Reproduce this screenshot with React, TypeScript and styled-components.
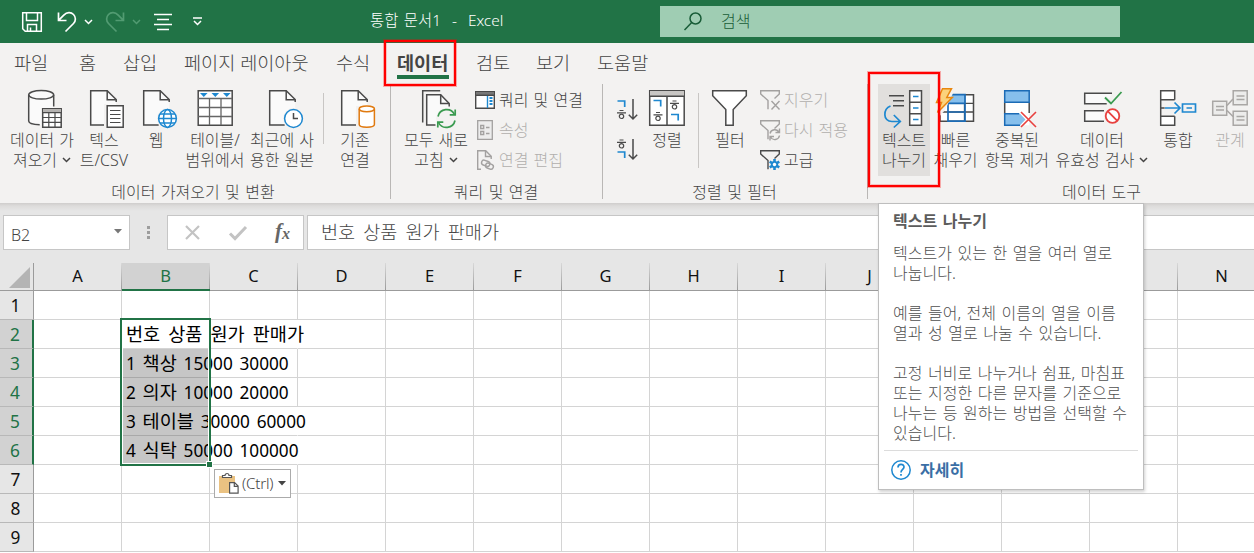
import React from 'react';
import styled, { createGlobalStyle, css } from 'styled-components';

const GREEN = '#217346';
const INK = '#444444';
const MUTED = '#b1afad';
const BLUE = '#1e88d0';
const STEEL = '#4a4a4a';

const GlobalStyle = createGlobalStyle`
  * { box-sizing: border-box; }
  body {
    margin: 0;
    overflow: hidden;
    background: #fff;
    font-family: 'Noto Sans', 'Noto Sans CJK KR', sans-serif;
    font-weight: 300;
    color: ${INK};
  }
  svg { display: block; flex: none; overflow: visible; }
`;

const Window = styled.div`
  position: relative;
  width: 1254px;
  height: 553px;
  overflow: hidden;
  display: flex;
  flex-direction: column;
`;

/* ---------- title bar ---------- */

const TitleBar = styled.header`
  height: 43px;
  flex: none;
  display: flex;
  align-items: center;
  background: ${GREEN};
  color: #fff;
`;

const QuickAccess = styled.div`
  width: 370px;
  display: flex;
  align-items: center;
  padding-left: 21px;
`;

const QuickIcon = styled.span<{ $gap?: number; $dim?: boolean }>`
  display: block;
  margin-left: ${p => p.$gap ?? 0}px;
  opacity: ${p => (p.$dim ? 0.32 : 1)};
`;

const DocTitle = styled.div`
  width: 290px;
  font-size: 15.4px;
  line-height: 20px;
  word-spacing: 1.5px;
  white-space: pre;
  padding-bottom: 2px;
`;

const SearchBox = styled.div`
  width: 460px;
  height: 31px;
  display: flex;
  align-items: center;
  padding: 0 0 1px 24px;
  gap: 19px;
  background: #9fcdb3;
  color: #185c37;
  font-size: 16px;
  line-height: 20px;
`;

/* ---------- ribbon ---------- */

const TabStrip = styled.nav`
  height: 40px;
  flex: none;
  display: flex;
  padding-left: 14px;
  background: #f3f2f1;
`;

const Tab = styled.div<{ $w: number; $gap: number; $active?: boolean }>`
  width: ${p => p.$w}px;
  height: 36px;
  margin-right: ${p => p.$gap}px;
  padding-top: 6px;
  font-size: 18.6px;
  line-height: 27px;
  white-space: nowrap;
  ${p =>
    p.$active &&
    css`
      font-weight: 700;
      color: #444;
      border-bottom: 4px solid ${GREEN};
    `}
`;

const Ribbon = styled.section`
  height: 120px;
  flex: none;
  display: flex;
  background: #f3f2f1;
`;

const Group = styled.div<{ $w: number; $last?: boolean }>`
  width: ${p => p.$w}px;
  flex: none;
  height: 115px;
  margin-top: 1px;
  display: flex;
  flex-direction: column;
  border-right: ${p => (p.$last ? 'none' : '1px solid #b9b7b5')};
`;

const GroupBody = styled.div<{ $pad: number }>`
  display: flex;
  height: 93px;
  padding-left: ${p => p.$pad}px;
`;

const GroupLabel = styled.div<{ $w: number }>`
  width: ${p => p.$w}px;
  height: 22px;
  padding-top: 2px;
  text-align: center;
  font-size: 16px;
  line-height: 26px;
  word-spacing: 1.2px;
  white-space: nowrap;
`;

const BigButton = styled.div<{ $w: number; $active?: boolean; $disabled?: boolean }>`
  width: ${p => p.$w}px;
  flex: none;
  height: 92px;
  padding-top: 4px;
  display: flex;
  flex-direction: column;
  align-items: center;
  background: ${p => (p.$active ? '#e1dfdd' : 'transparent')};
  color: ${p => (p.$disabled ? MUTED : INK)};
`;

const Caption = styled.span`
  display: flex;
  align-items: center;
  gap: 5px;
  height: 20px;
  font-size: 16px;
  line-height: 20px;
  word-spacing: 1px;
  white-space: nowrap;
`;

const Divider = styled.i<{ $h: number; $l: number; $r: number }>`
  width: 1px;
  height: ${p => p.$h}px;
  margin: 9px ${p => p.$r}px 0 ${p => p.$l}px;
  background: #c8c6c4;
`;

const SmallStack = styled.div<{ $gap?: number }>`
  display: flex;
  flex-direction: column;
  padding: 1px 0 0 ${p => p.$gap ?? 0}px;
`;

const SmallButton = styled.div<{ $disabled?: boolean }>`
  height: 30px;
  display: flex;
  align-items: center;
  gap: 4px;
  font-size: 16px;
  line-height: 20px;
  word-spacing: 1px;
  white-space: nowrap;
  color: ${p => (p.$disabled ? MUTED : INK)};
`;

const SortStack = styled.div`
  width: 34px;
  padding: 14px 0 0 13px;
  display: flex;
  flex-direction: column;
  gap: 18px;
`;

/* ---------- formula bar ---------- */

const FormulaBar = styled.section`
  height: 60px;
  flex: none;
  display: flex;
  align-items: flex-start;
  padding: 12px 0 0 3px;
  background: linear-gradient(#cfcdcc 0, #dddcdb 3px, #e6e6e6 8px);
`;

const Field = styled.div<{ $w: number }>`
  width: ${p => p.$w}px;
  height: 35px;
  flex: none;
  display: flex;
  align-items: center;
  background: #fff;
  border: 1px solid #c6c6c6;
`;

const NameField = styled(Field)`
  justify-content: space-between;
  padding: 4px 7px 0 7px;
  font-size: 16px;
  line-height: 20px;
  svg { margin-top: -6px; }
`;

const Grip = styled.div`
  width: 37px;
  height: 35px;
  flex: none;
  display: flex;
  flex-direction: column;
  align-items: center;
  justify-content: center;
  gap: 2px;
`;

const GripDot = styled.i`
  width: 3px;
  height: 3px;
  background: #9d9d9d;
`;

const FxField = styled(Field)`
  padding-left: 13px;
`;

const FormulaField = styled(Field)`
  margin-left: 3px;
  padding: 0 0 2px 13px;
  font-size: 18.6px;
  line-height: 24px;
  word-spacing: 3.2px;
  color: ${INK};
`;

/* ---------- sheet ---------- */

const Sheet = styled.section`
  display: flex;
  flex-direction: column;
  font-weight: 400;
`;

const SheetRow = styled.div`
  display: flex;
  flex: none;
`;

const Corner = styled.div`
  width: 34px;
  height: 28px;
  flex: none;
  display: flex;
  padding: 4px 0 0 9px;
  background: #e6e6e6;
  border-right: 1px solid #9b9b9b;
  border-bottom: 1px solid #9b9b9b;
`;

const ColumnHead = styled.div<{ $on?: boolean }>`
  width: 88px;
  height: 28px;
  flex: none;
  padding-right: 1px;
  text-align: center;
  font-size: 16.5px;
  line-height: 25px;
  color: ${p => (p.$on ? GREEN : '#111')};
  background:
    linear-gradient(#d8d8d8, #9b9b9b) right / 1px 100% no-repeat,
    ${p => (p.$on ? '#d2d2d2' : '#e6e6e6')};
  border-bottom: ${p => (p.$on ? `2px solid ${GREEN}` : '1px solid #9b9b9b')};
`;

const RowHead = styled.div<{ $on?: boolean }>`
  width: 34px;
  height: 29px;
  flex: none;
  padding-right: 2px;
  text-align: center;
  font-size: 17.3px;
  line-height: 30px;
  color: ${p => (p.$on ? GREEN : '#111')};
  background: ${p => (p.$on ? '#d2d2d2' : '#e6e6e6')};
  border-bottom: 1px solid #b8b8b8;
  border-right: ${p => (p.$on ? `2px solid ${GREEN}` : '1px solid #9b9b9b')};
`;

const Cell = styled.div<{ $fill?: boolean; $open?: boolean }>`
  width: 88px;
  height: 29px;
  flex: none;
  padding-left: 4px;
  font-size: 17.2px;
  line-height: 28px;
  white-space: pre;
  color: #000;
  background: ${p => (p.$fill ? '#c6c6c6' : '#fff')};
  border-bottom: 1px solid ${p => (p.$fill ? '#a9a9a9' : '#d4d4d4')};
  border-right: 1px solid ${p => (p.$open ? 'transparent' : '#d4d4d4')};
`;

const CellText = styled.span`
  position: relative;
  z-index: 1;
  word-spacing: 2.3px;
`;

const Hangul = styled.span<{ $spread?: boolean }>`
  font-size: 18.6px;
  word-spacing: ${p => (p.$spread ? 3.2 : 2)}px;
`;

/* ---------- floating pieces ---------- */

const SelectionFrame = styled.div`
  position: absolute;
  z-index: 2;
  left: 120px;
  top: 318px;
  width: 91px;
  height: 148px;
  border: 2px solid ${GREEN};
  box-shadow: inset 0 0 0 1px #fff;
  &::after {
    content: '';
    position: absolute;
    right: -3px;
    bottom: -3px;
    width: 5px;
    height: 5px;
    background: ${GREEN};
    box-shadow: 0 0 0 1px #fff;
  }
`;

const PasteChip = styled.div`
  position: absolute;
  z-index: 2;
  left: 214px;
  top: 469px;
  width: 77px;
  height: 29px;
  display: flex;
  align-items: center;
  padding-left: 4px;
  gap: 3px;
  background: #fff;
  border: 1px solid #ababab;
  font-size: 15.2px;
  line-height: 20px;
  letter-spacing: -0.2px;
  color: #444;
`;

const PasteLabel = styled.span`
  padding: 0 2px 2px 0;
`;

const Marker = styled.div<{ $x: number; $y: number; $w: number; $h: number }>`
  position: absolute;
  z-index: 5;
  left: ${p => p.$x}px;
  top: ${p => p.$y}px;
  width: ${p => p.$w}px;
  height: ${p => p.$h}px;
  border: 2px solid #ff0000;
  box-shadow: 0 0 0 1px rgba(255, 0, 0, 0.3), inset 0 0 0 1px rgba(255, 0, 0, 0.2);
`;

const Tooltip = styled.aside`
  position: absolute;
  z-index: 4;
  left: 878px;
  top: 203px;
  width: 266px;
  height: 287px;
  padding: 7px 5px 0 5px;
  background: #fff;
  border: 1px solid #bebebe;
  box-shadow: 1px 2px 3px rgba(0, 0, 0, 0.18);
  color: #505050;
  font-size: 16px;
  line-height: 20px;
  word-spacing: 1.4px;
`;

const TipTitle = styled.h1`
  margin: 0;
  padding-left: 9px;
  font-size: 16px;
  line-height: 20px;
  font-weight: 700;
  color: #5c5c5c;
`;

const TipText = styled.p`
  margin: 12px 0 0;
  padding-left: 9px;
  white-space: pre;
  & + & { margin-top: 20px; }
`;

const TipFooter = styled.div`
  margin-top: 7px;
  padding: 9px 0 0 7px;
  display: flex;
  align-items: center;
  gap: 9px;
  border-top: 1px solid #dcdcdc;
  color: #3a6ea5;
  font-weight: 700;
`;

/* ---------- icons ---------- */

const Chevron = ({ color = INK }: { color?: string }) => (
  <svg width="9" height="6" viewBox="0 0 9 6" fill="none" stroke={color} strokeWidth="1.5">
    <path d="M1 1l3.5 3.5L8 1" />
  </svg>
);

const Big = ({ children }: { children: React.ReactNode }) => (
  <svg width="40" height="42" viewBox="0 0 40 42" fill="none" stroke={STEEL} strokeWidth="1.5">
    {children}
  </svg>
);

const Page = ({ x }: { x: number }) => (
  <g transform={`translate(${x} 0)`}>
    <path d="M0 2.7h16.5l9 9.3v24.9H0z" fill="#fafafa" stroke="none" />
    <path d="M25.5 14v-2.5L16.5 2.7H0v34.2h15" />
    <path d="M16.5 2.7v9h9" />
  </g>
);

const DatabaseTable = () => (
  <Big>
    <path d="M6.7 7v26c0 2.4 5.5 3.8 12.5 3.8V20h12.500V7" fill="#fafafa" stroke="none" />
    <ellipse cx="19.2" cy="6.8" rx="12.5" ry="4.3" fill="#fafafa" />
    <path d="M6.7 7v26c0 2 4.5 3.5 11 3.8M31.7 7v11.5" />
    <path d="M20.7 20.7h18.5v18.5H20.7z" fill="#fff" />
    <path d="M21 21h18v3.5H21z" fill="#b5b3b1" stroke="none" />
    <path d="M20.7 24.7h18.5M20.7 29.5h18.5M20.7 34.3h18.5M26.8 24.7v14.5M33 24.7v14.5" strokeWidth="1.2" />
  </Big>
);

const TextFile = () => (
  <Big>
    <Page x={6.7} />
    <path d="M20 16h4v22h-4z" fill="#f3f2f1" stroke="none" />
    <path d="M23.2 17.7h16v21.5h-16z" fill="#fff" />
    <path d="M26 22.5h10.5M26 26.5h10.5M26 30.5h10.5M26 34.5h10.5" strokeWidth="1.1" />
  </Big>
);

const WebFile = () => (
  <Big>
    <Page x={7.7} />
    <circle cx="31.5" cy="30.5" r="10.5" fill="#f3f2f1" stroke="none" />
    <g stroke={BLUE}>
      <circle cx="31.5" cy="30.5" r="8.9" fill="#fff" />
      <ellipse cx="31.5" cy="30.5" rx="4" ry="8.9" />
      <path d="M22.6 30.5h17.8M24 26h15M24 35h15" strokeWidth="1.3" />
    </g>
  </Big>
);

const TableRange = () => (
  <Big>
    <path d="M3.2 2.7h34v34.5h-34z" fill="#fff" />
    <path d="M3.2 10.5h34M3.2 19.5h34M3.2 28.5h34M14.5 10v27M26 10v27" stroke="#666" strokeWidth="1.3" />
    <path d="M5 5h7.6L8.8 9zM16.5 5h7.6l-3.8 4zM28 5h7.6l-3.8 4z" fill={BLUE} stroke="none" />
  </Big>
);

const RecentFile = () => (
  <Big>
    <Page x={7.7} />
    <circle cx="31.5" cy="30.5" r="10.5" fill="#f3f2f1" stroke="none" />
    <circle cx="31.5" cy="30.5" r="8.9" fill="#fff" stroke={BLUE} />
    <path d="M31.5 25v5.500h4.500" />
  </Big>
);

const ExistingLink = () => (
  <Big>
    <Page x={6.7} />
    <path d="M21 18h5v20h-5z" fill="#f3f2f1" stroke="none" />
    <g stroke="#e07a10" fill="#fff">
      <path d="M24.2 21v15.5c0 1.6 3.3 2.7 7.6 2.7s7.6-1.1 7.6-2.7V21" />
      <ellipse cx="31.8" cy="20.8" rx="7.6" ry="2.9" />
    </g>
  </Big>
);

const RefreshAll = () => (
  <Big>
    <path d="M6.7 34.5V2.7h17.5" />
    <path d="M10.7 6.7h14.5l8 8.5v21.7H10.7z" fill="#fafafa" stroke="none" />
    <path d="M19.5 36.9h-8.8V6.7h14l8.5 8.8v3" />
    <path d="M24.7 6.7v8.8h8.5" />
    <circle cx="30.5" cy="30.5" r="10.5" fill="#f3f2f1" stroke="none" />
    <g stroke="#3a9b50" strokeWidth="1.7">
      <path d="M22 28.500a8.800 8.800 0 0 1 16.500-2M39 32.500a8.800 8.800 0 0 1-16.500 2" />
      <path d="M39.2 21.5v5.3h-5.5M21.8 39.5v-5.3h5.5" />
    </g>
  </Big>
);

const QueriesPane = () => (
  <svg width="20" height="18" viewBox="0 0 20 18" fill="#fff" stroke={STEEL} strokeWidth="1.4">
    <path d="M.7.7h18.6v16.6H.7z" />
    <path d="M1 1h18v3H1z" fill="#777" stroke="none" />
    <path d="M.7 4.3h18.6" />
    <path d="M12.5 5v12" stroke={BLUE} />
    <path d="M14.5 7h3M14.5 10h3M14.5 13h3" stroke={BLUE} strokeWidth="2" />
  </svg>
);

const Properties = () => (
  <svg width="20" height="20" viewBox="0 0 20 20" fill="none" stroke="#a3a1a0" strokeWidth="1.3">
    <path d="M2.7.7h14.6v18.6H2.7z" fill="#ededed" />
    <path d="M5.7 5.5h3v3h-3zM5.7 11.5h3v3h-3zM11 7.5h3.5M11 13.5h3.5" />
  </svg>
);

const EditLinks = () => (
  <svg width="20" height="20" viewBox="0 0 20 20" fill="none" stroke="#a3a1a0" strokeWidth="1.4">
    <path d="M6 19.3H2.7V.7h8l5.5 5.5V9" />
    <path d="M10.5.7v5.8h5.7" />
    <rect x="6.5" y="10.5" width="8.5" height="5" rx="2.5" transform="rotate(20 10 13)" />
    <rect x="10.5" y="13.5" width="8" height="5" rx="2.5" transform="rotate(20 14 16)" />
  </svg>
);

const Giyeok = ({ x = 0, y }: { x?: number; y: number }) => (
  <path d={`M${x + 0.5} ${y}h7.2v6`} stroke={BLUE} strokeWidth="1.7" />
);

const Hieut = ({ x, y }: { x: number; y: number }) => (
  <g transform={`translate(${x} ${y})`} stroke={STEEL} strokeWidth="1.2">
    <path d="M2.5 .5h4M0 2.8h9" />
    <circle cx="4.5" cy="6.3" r="2.2" />
  </g>
);

const SortMini = ({ desc }: { desc?: boolean }) => (
  <svg width="21" height="22" viewBox="0 0 21 22" fill="none" stroke={STEEL} strokeWidth="1.5">
    <Giyeok y={desc ? 14 : 3} />
    <Hieut x={0} y={desc ? 1.5 : 12} />
    <path d="M16 1v20M11.8 16.800L16 21l4.200-4.200" />
  </svg>
);

const SortBig = () => (
  <Big>
    <path d="M2.7 2.7h34.5v34.5H2.7z" fill="#fff" />
    <path d="M3 3h34v5H3z" fill="#c8c6c4" stroke="none" />
    <path d="M2.7 8.2h34.5M20 8v29" />
    <Giyeok x={6} y={12.5} />
    <Hieut x={6.5} y={24} />
    <Hieut x={23} y={12.5} />
    <Giyeok x={23.5} y={26.5} />
  </Big>
);

const FilterBig = () => (
  <Big>
    <path d="M2.7 2.7h33.6v5L23.2 21.5v15.7h-7.400V21.500L2.700 7.700z" fill="#fff" />
  </Big>
);

const FilterSmall = ({ kind }: { kind: 'clear' | 'reapply' | 'advanced' }) => (
  <svg
    width="20"
    height="20"
    viewBox="0 0 20 20"
    fill="none"
    stroke={kind === 'advanced' ? STEEL : '#a3a1a0'}
    strokeWidth="1.4"
  >
    <path d="M8 19.3V10.500L.7 4V.7h18.600V4L14.500 8.500" />
    {kind === 'clear' && <path d="M11.500 11l8 8.500M19.500 11l-8 8.500" />}
    {kind === 'reapply' && (
      <path d="M10 13.500a4.800 4.800 0 0 1 9-1M19.500 15.500a4.800 4.800 0 0 1-9 1.500M19.500 8.500v4h-4M10 20.500v-4h4" />
    )}
    {kind === 'advanced' && (
      <g stroke={BLUE}>
        <path d="M14.5 9v11M9.7 11.7l9.6 5.6M9.7 17.3l9.6-5.6" strokeWidth="2.6" />
        <circle cx="14.5" cy="14.5" r="3.6" fill={BLUE} stroke="none" />
        <circle cx="14.5" cy="14.5" r="1.7" fill="#fff" stroke="none" />
      </g>
    )}
  </svg>
);

const TextToColumns = () => (
  <Big>
    <path d="M5 7.7h15M9 12.7h11M9 17.7h11" strokeWidth="1.6" />
    <path d="M25.7 2.7h11.8v34.5H25.700z" fill="#fff" />
    <path d="M25.7 14.2h11.8M25.7 25.7h11.8" />
    <path d="M29 8.5h5.5M29 20h5.5M29 31.500h5.500" stroke={BLUE} strokeWidth="1.700" />
    <path d="M6.500 18C-1 21-1.500 33.500 8 33.500h8M9.800 27l6.500 6.500-6.500 6" stroke={BLUE} strokeWidth="1.700" />
  </Big>
);

const FlashFill = () => (
  <Big>
    <path d="M4 6.7h33.500v26.500H4z" fill="#fff" />
    <path d="M4 15.3h33.500M4 24h33.500M28.500 6.700v26.500" strokeWidth="1.300" />
    <path d="M12 6.700h17v8.600H12z" fill="#86bfec" stroke="none" />
    <path d="M12 6.700h17v26.500H12zM12 15.300h17M12 24h17" stroke="#1b6bb5" strokeWidth="1.700" />
    <path d="M-1 0h20.500L9 22l-6 7-5-4z" fill="#f3f2f1" stroke="none" />
    <path d="M6.500 .700h9L10.800 9.500h5.500L1.500 24.500 5.500 14.500H.500z" fill="#fbd27c" stroke="#e8870f" />
  </Big>
);

const RemoveDuplicates = () => (
  <Big>
    <path d="M7.7 2.7h24.500v34.500H7.700z" fill="#fff" stroke="none" />
    <path d="M7.7 14v12M32.200 14v11" />
    <path d="M7.7 2.7h24.500v11.500H7.700z" fill="#86bfec" stroke="#1b6bb5" />
    <path d="M23 37.200H7.700V25.700H23l5.500 5.700z" fill="#86bfec" stroke="none" />
    <path d="M23 37.200H7.700V25.700h14.500" stroke="#1b6bb5" />
    <path d="M24 24l15 15M39 24L24 39" stroke="#e8413f" strokeWidth="1.600" />
  </Big>
);

const Validation = () => (
  <Big>
    <path d="M30 5.200H2.700v10.500h22M22 22.700H2.700v10.500H22" fill="#fafafa" />
    <path d="M23 9.500l6 6L39.500 4" stroke="#f3f2f1" strokeWidth="4" />
    <path d="M23 9.500l6 6L39.500 4" stroke="#3a9b50" strokeWidth="1.800" />
    <circle cx="30.500" cy="28" r="6.800" fill="#fff" stroke="#e8413f" strokeWidth="1.800" />
    <path d="M25.700 23.200l9.600 9.600" stroke="#e8413f" strokeWidth="1.800" />
  </Big>
);

const Consolidate = () => (
  <Big>
    <path d="M2.7 2.7h14v9h-14zM2.700 28h14v9h-14z" fill="#fff" stroke="none" />
    <path d="M16.700 11.700v-9h-14v34.500h14v-9M2.700 11.700h14M2.700 28.200h14M2.700 20h4" />
    <path d="M7 20h14.500M16.500 14.500l5.500 5.500-5.500 5.500M24.500 16h13v8h-13zM28.500 20h5.500" stroke={BLUE} strokeWidth="1.700" />
  </Big>
);

const Relations = () => (
  <Big>
    <g stroke="#a9a7a5" fill="#ececeb">
      <path d="M17 17.500L23 11M17 22.500l6 6" />
      <path d="M2.700 13.200h14v14h-14zM23.200 2.700h14v14h-14zM23.200 23.200h14v14h-14z" />
      <path d="M6 18.500h8M6 22h8M26.500 8h8M26.500 11.500h8M26.500 28.500h8M26.500 32h8" />
    </g>
  </Big>
);

/* ---------- page ---------- */

const tabs = [
  { name: '파일', w: 34, gap: 31 },
  { name: '홈', w: 17, gap: 27 },
  { name: '삽입', w: 34, gap: 27 },
  { name: '페이지 레이아웃', w: 125, gap: 27 },
  { name: '수식', w: 34, gap: 27 },
  { name: '데이터', w: 52, gap: 27, active: true },
  { name: '검토', w: 34, gap: 26 },
  { name: '보기', w: 34, gap: 27 },
  { name: '도움말', w: 52, gap: 0 },
];

interface BigItem {
  w: number;
  icon: React.ReactNode;
  lines: string[];
  menu?: boolean;
  active?: boolean;
  disabled?: boolean;
}

const RibbonButton = ({ w, icon, lines, menu, active, disabled }: BigItem) => (
  <BigButton $w={w} $active={active} $disabled={disabled}>
    {icon}
    {lines.map((line, i) => (
      <Caption key={line}>
        {line}
        {menu && i === lines.length - 1 && <Chevron />}
      </Caption>
    ))}
  </BigButton>
);

const columns = 'ABCDEFGHIJKLMN'.split('');
const coveredColumns = 'KLM';

const rows: Record<number, React.ReactNode> = {
  2: <Hangul $spread>번호 상품 원가 판매가</Hangul>,
  3: <>1 <Hangul>책상</Hangul> 15000 30000</>,
  4: <>2 <Hangul>의자</Hangul> 10000 20000</>,
  5: <>3 <Hangul>테이블</Hangul> 30000 60000</>,
  6: <>4 <Hangul>식탁</Hangul> 50000 100000</>,
};

const spills = [2, 5, 6];

export default function App() {
  return (
    <Window>
      <GlobalStyle />
      <TitleBar>
        <QuickAccess>
          <QuickIcon>
            <svg width="22" height="22" viewBox="0 0 22 22" fill="none" stroke="#fff" strokeWidth="1.5">
              <path d="M1.700 1.700h18.600v18.600H4.200l-2.500-2.500zM5.500 2v7.500h11V2M6.500 20v-6.500h9V20M9.500 20v-3.500" />
            </svg>
          </QuickIcon>
          <QuickIcon $gap={14}>
            <svg width="20" height="22" viewBox="0 0 20 22" fill="none" stroke="#fff" strokeWidth="1.7">
              <path d="M1.500 1.500v8h8M1.800 9.200l5-5C10 1 14 1 16.500 3.500s2.500 6.500 0 9L8.500 20.500" />
            </svg>
          </QuickIcon>
          <QuickIcon $gap={7}><Chevron color="#fff" /></QuickIcon>
          <QuickIcon $gap={12} $dim>
            <svg width="20" height="22" viewBox="0 0 20 22" fill="none" stroke="#b9f0cf" strokeWidth="1.7">
              <path d="M18.500 1.500v8h-8M18.200 9.200l-5-5C10 1 6 1 3.500 3.500s-2.500 6.500 0 9l8 8" />
            </svg>
          </QuickIcon>
          <QuickIcon $gap={7} $dim><Chevron color="#b9f0cf" /></QuickIcon>
          <QuickIcon $gap={13}>
            <svg width="18" height="18" viewBox="0 0 18 18" fill="none" stroke="#fff" strokeWidth="1.5">
              <path d="M0 1.500h18M3 6.500h12M0 11.500h18M3 16.500h12" />
            </svg>
          </QuickIcon>
          <QuickIcon $gap={21}>
            <svg width="9" height="9" viewBox="0 0 9 9" fill="none" stroke="#fff" strokeWidth="1.5">
              <path d="M0 1h9M1 4l3.500 3.500L8 4" />
            </svg>
          </QuickIcon>
        </QuickAccess>
        <DocTitle>{'통합 문서1  -  Excel'}</DocTitle>
        <SearchBox>
          <svg width="18" height="19" viewBox="0 0 18 19" fill="none" stroke="#185c37" strokeWidth="1.5">
            <circle cx="11.500" cy="6.500" r="5.500" />
            <path d="M7.700 10.500L.500 18" />
          </svg>
          검색
        </SearchBox>
      </TitleBar>

      <TabStrip>
        {tabs.map(t => (
          <Tab key={t.name} $w={t.w} $gap={t.gap} $active={t.active}>{t.name}</Tab>
        ))}
      </TabStrip>

      <Ribbon>
        <Group $w={391}>
          <GroupBody $pad={5}>
            <RibbonButton w={74} icon={<DatabaseTable />} lines={['데이터 가', '져오기']} menu />
            <RibbonButton w={50} icon={<TextFile />} lines={['텍스', '트/CSV']} />
            <RibbonButton w={54} icon={<WebFile />} lines={['웹']} />
            <RibbonButton w={64} icon={<TableRange />} lines={['테이블/', '범위에서']} />
            <RibbonButton w={70} icon={<RecentFile />} lines={['최근에 사', '용한 원본']} />
            <Divider $h={51} $l={6} $r={4} />
            <RibbonButton w={54} icon={<ExistingLink />} lines={['기존', '연결']} />
          </GroupBody>
          <GroupLabel $w={386}>데이터 가져오기 및 변환</GroupLabel>
        </Group>

        <Group $w={212}>
          <GroupBody $pad={8}>
            <RibbonButton w={74} icon={<RefreshAll />} lines={['모두 새로', '고침']} menu />
            <SmallStack $gap={2}>
              <SmallButton><QueriesPane />쿼리 및 연결</SmallButton>
              <SmallButton $disabled><Properties />속성</SmallButton>
              <SmallButton $disabled><EditLinks />연결 편집</SmallButton>
            </SmallStack>
          </GroupBody>
          <GroupLabel $w={210}>쿼리 및 연결</GroupLabel>
        </Group>

        <Group $w={265}>
          <GroupBody $pad={1}>
            <SortStack>
              <SortMini />
              <SortMini desc />
            </SortStack>
            <RibbonButton w={58} icon={<SortBig />} lines={['정렬']} />
            <Divider $h={75} $l={2} $r={1} />
            <RibbonButton w={60} icon={<FilterBig />} lines={['필터']} />
            <SmallStack>
              <SmallButton $disabled><FilterSmall kind="clear" />지우기</SmallButton>
              <SmallButton $disabled><FilterSmall kind="reapply" />다시 적용</SmallButton>
              <SmallButton><FilterSmall kind="advanced" />고급</SmallButton>
            </SmallStack>
          </GroupBody>
          <GroupLabel $w={263}>정렬 및 필터</GroupLabel>
        </Group>

        <Group $w={386} $last>
          <GroupBody $pad={10}>
            <RibbonButton w={52} icon={<TextToColumns />} lines={['텍스트', '나누기']} active />
            <RibbonButton w={51} icon={<FlashFill />} lines={['빠른', '채우기']} />
            <RibbonButton w={72} icon={<RemoveDuplicates />} lines={['중복된', '항목 제거']} />
            <RibbonButton w={98} icon={<Validation />} lines={['데이터', '유효성 검사']} menu />
            <RibbonButton w={54} icon={<Consolidate />} lines={['통합']} />
            <RibbonButton w={50} icon={<Relations />} lines={['관계']} disabled />
          </GroupBody>
          <GroupLabel $w={467}>데이터 도구</GroupLabel>
        </Group>
      </Ribbon>

      <FormulaBar>
        <NameField $w={127}>
          B2
          <svg width="8" height="5" viewBox="0 0 8 5"><path d="M0 0h8L4 4.500z" fill="#777" /></svg>
        </NameField>
        <Grip><GripDot /><GripDot /><GripDot /></Grip>
        <FxField $w={137}>
          <svg width="110" height="24" viewBox="0 0 110 24" fill="none" stroke="#c3c3c3">
            <path d="M5 5l13 13M18 5L5 18" strokeWidth="2.200" />
            <path d="M49 12.500l5 5L65 6" strokeWidth="3" />
            <text x="94" y="17" fontFamily="'Liberation Serif', serif" fontStyle="italic" fontWeight="700" fontSize="21" fill="#666" stroke="none">f</text>
            <text x="101" y="18" fontFamily="'Liberation Serif', serif" fontStyle="italic" fontWeight="700" fontSize="16" fill="#666" stroke="none">x</text>
          </svg>
        </FxField>
        <FormulaField $w={950}>번호 상품 원가 판매가</FormulaField>
      </FormulaBar>

      <Sheet>
        <SheetRow>
          <Corner>
            <svg width="21" height="21" viewBox="0 0 21 21"><path d="M21 0v21H0z" fill="#b4b4b4" /></svg>
          </Corner>
          {columns.map(c => (
            <ColumnHead key={c} $on={c === 'B'}>{coveredColumns.includes(c) ? null : c}</ColumnHead>
          ))}
        </SheetRow>
        {[1, 2, 3, 4, 5, 6, 7, 8, 9].map(n => (
          <SheetRow key={n}>
            <RowHead $on={n >= 2 && n <= 6}>{n}</RowHead>
            {columns.map(c => (
              <Cell key={c} $fill={c === 'B' && n >= 3 && n <= 6} $open={c === 'C' && spills.includes(n)}>
                {c === 'B' && rows[n] && <CellText>{rows[n]}</CellText>}
              </Cell>
            ))}
          </SheetRow>
        ))}
      </Sheet>

      <SelectionFrame />
      <PasteChip>
        <svg width="20" height="21" viewBox="0 0 20 21" fill="none" stroke="#555" strokeWidth="1.2">
          <path d="M0 3h16v17H0z" fill="#eac282" stroke="none" />
          <path d="M3.500 4.500v-2h2.500a2 2 0 0 1 4 0h2.500v2z" fill="#fff" />
          <path d="M10.600 9.600h5l3.500 3.500v7h-8.500z" fill="#fff" />
          <path d="M15.300 9.600v3.700h3.700" />
        </svg>
        <PasteLabel>(Ctrl)</PasteLabel>
        <svg width="8" height="5" viewBox="0 0 8 5"><path d="M0 0h8L4 4.500z" fill="#444" /></svg>
      </PasteChip>

      <Tooltip>
        <TipTitle>텍스트 나누기</TipTitle>
        <TipText>{'텍스트가 있는 한 열을 여러 열로\n나눕니다.'}</TipText>
        <TipText>{'예를 들어, 전체 이름의 열을 이름\n열과 성 열로 나눌 수 있습니다.'}</TipText>
        <TipText>{'고정 너비로 나누거나 쉼표, 마침표\n또는 지정한 다른 문자를 기준으로\n나누는 등 원하는 방법을 선택할 수\n있습니다.'}</TipText>
        <TipFooter>
          <svg width="20" height="20" viewBox="0 0 20 20" fill="none" stroke={BLUE} strokeWidth="1.5">
            <circle cx="10" cy="10" r="9.200" />
            <path d="M7 7.500c0-4 6-4 6-.500 0 2.500-3 2.500-3 5.500M10 14v1.800" strokeWidth="1.700" />
          </svg>
          자세히
        </TipFooter>
      </Tooltip>

      <Marker $x={384} $y={40} $w={72} $h={46} />
      <Marker $x={868} $y={72} $w={72} $h={115} />
    </Window>
  );
}
